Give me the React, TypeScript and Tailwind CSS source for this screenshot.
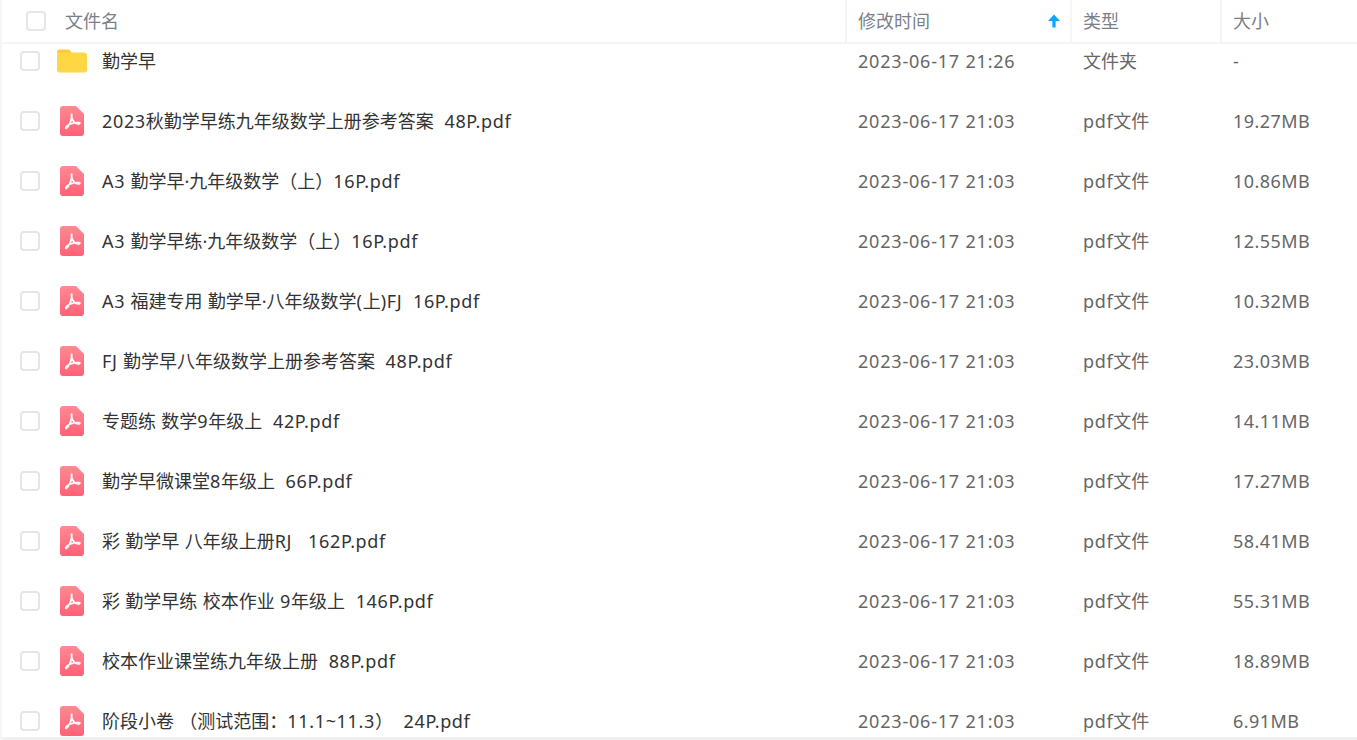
import React from "react";

type FileRow = { name: string; time: string; type: string; size: string; folder?: boolean };

const T = "2023-06-17 21:03";

const files: FileRow[] = [
  { name: "勤学早", time: "2023-06-17 21:26", type: "文件夹", size: "-", folder: true },
  { name: "2023秋勤学早练九年级数学上册参考答案  48P.pdf", time: T, type: "pdf文件", size: "19.27MB" },
  { name: "A3 勤学早·九年级数学（上）16P.pdf", time: T, type: "pdf文件", size: "10.86MB" },
  { name: "A3 勤学早练·九年级数学（上）16P.pdf", time: T, type: "pdf文件", size: "12.55MB" },
  { name: "A3 福建专用 勤学早·八年级数学(上)FJ  16P.pdf", time: T, type: "pdf文件", size: "10.32MB" },
  { name: "FJ 勤学早八年级数学上册参考答案  48P.pdf", time: T, type: "pdf文件", size: "23.03MB" },
  { name: "专题练 数学9年级上  42P.pdf", time: T, type: "pdf文件", size: "14.11MB" },
  { name: "勤学早微课堂8年级上  66P.pdf", time: T, type: "pdf文件", size: "17.27MB" },
  { name: "彩 勤学早 八年级上册RJ   162P.pdf", time: T, type: "pdf文件", size: "58.41MB" },
  { name: "彩 勤学早练 校本作业 9年级上  146P.pdf", time: T, type: "pdf文件", size: "55.31MB" },
  { name: "校本作业课堂练九年级上册  88P.pdf", time: T, type: "pdf文件", size: "18.89MB" },
  { name: "阶段小卷 （测试范围：11.1~11.3）  24P.pdf", time: T, type: "pdf文件", size: "6.91MB" },
];

// latin runs get a little tracking, the CJK glyphs stay on their 18px grid
const Mixed = ({ text }: { text: string }) => (
  <>
    {text.split(/([\x20-\x7e]+)/).map((part, i) =>
      i % 2 === 1 ? (
        <span key={i} className="tracking-[0.65px]">
          {part}
        </span>
      ) : (
        part
      )
    )}
  </>
);

const FolderIcon = () => (
  <svg width="30" height="24" viewBox="0 0 30 24" className="shrink-0">
    <path d="M0 3C0 1.500 1 .5 2.500 .5h8c1.200 0 2 .5 2.800 1.400L15 4H0z" fill="#ffc933" />
    <path d="M0 5.500C0 4 1 3.500 2.500 3.500H27c1.700 0 3 1 3 2.600V21c0 1.500-1.200 2.500-2.700 2.500H2.500C1 23.500 0 22.500 0 21z" fill="#ffd643" />
  </svg>
);

const PdfIcon = () => (
  <svg width="24" height="30" viewBox="0 0 24 30" className="shrink-0">
    <defs>
      <linearGradient id="pdfFill" x1="0" y1="0" x2="0" y2="1">
        <stop offset="0" stopColor="#ff8a93" />
        <stop offset="1" stopColor="#ff6078" />
      </linearGradient>
    </defs>
    <path d="M3 0h13l8 8v19a3 3 0 0 1-3 3H3a3 3 0 0 1-3-3V3a3 3 0 0 1 3-3z" fill="url(#pdfFill)" />
    <path
      d="M11.500 8.500c-.4 2.500.8 5.400 2.600 7.500 1.300 1.400 3.500 2.100 5.300 1.800.8-.2.600-1-.2-1.100-2.700-.3-6 .1-8.900 1.300-2 .9-3.900 2.300-4.500 3.500-.3.700.4 1.100.9.600 2-1.900 4-6 4.700-9.600.3-1.400.5-2.900.4-3.900-.1-.6-.2-.6-.3-.1z"
      fill="none"
      stroke="#fff"
      strokeWidth="1.700"
      strokeLinejoin="round"
    />
  </svg>
);

const Check = () => (
  <span className="block h-[20px] w-[20px] shrink-0 rounded-[4px] border-2 border-[#e6e6e6] bg-white" />
);

const App = () => {
  return (
    <div
      className="flex h-[740px] w-[1357px] flex-col overflow-hidden border-l-2 border-[#f5f5f5] bg-white text-[18px] text-[#666]"
      style={{ fontFamily: '"Noto Sans", "Noto Sans CJK SC", sans-serif' }}
    >
      {/* Header */}
      <div className="relative z-10 flex h-[44px] shrink-0 items-center border-b-2 border-[#f5f5f5] bg-white text-[#7a7f88]">
        <div className="flex w-[843px] items-center">
          <div className="ml-[24px] h-[20px] w-[20px] rounded-[4px] border-2 border-[#e6e6e6]" />
          <span className="ml-[19px]">文件名</span>
        </div>
        <div className="flex h-full w-[225px] items-center justify-between border-l-2 border-[#f5f5f5] pl-[11px] pr-[10px]">
          <span>修改时间</span>
          <svg width="12" height="14" viewBox="0 0 12 14">
            <path d="M6 .5l6 6.500H7.600v6.500H4.400V7H0z" fill="#06a7ff" />
          </svg>
        </div>
        <div className="flex h-full w-[150px] items-center border-l-2 border-[#f5f5f5] pl-[11px]">类型</div>
        <div className="flex h-full flex-1 items-center border-l-2 border-[#f5f5f5] pl-[11px]">大小</div>
      </div>

      {/* List, scrolled slightly under the header */}
      <div className="mt-[-13px] flex-1 overflow-hidden">
        {files.map((f) => (
          <div key={f.name} className="flex h-[60px] items-center">
            <div className="flex w-[843px] items-center">
              <div className="ml-[18px]">
                <Check />
              </div>
              <div className="ml-[17px] flex w-[30px] justify-center">
                {f.folder ? <FolderIcon /> : <PdfIcon />}
              </div>
              <span className="ml-[15px] whitespace-pre text-[#333]">
                <Mixed text={f.name} />
              </span>
            </div>
            <div className="w-[225px] pl-[13px] tracking-[0.8px]">{f.time}</div>
            <div className="w-[150px] pl-[13px]">
              <Mixed text={f.type} />
            </div>
            <div className="flex-1 pl-[13px] tracking-[0.45px]">{f.size}</div>
          </div>
        ))}
      </div>
      <div className="h-[3px] shrink-0 bg-[#f0f0f0]" />
    </div>
  );
};

export default App;
